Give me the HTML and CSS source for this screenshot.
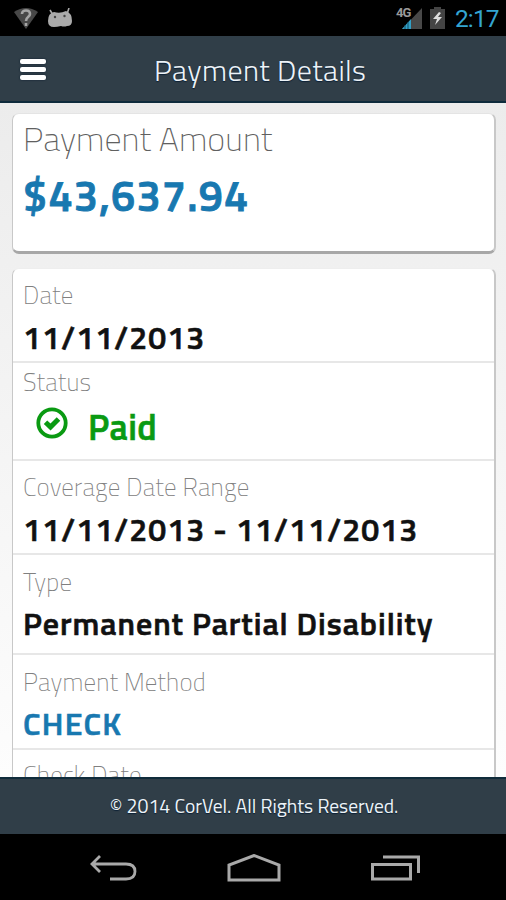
FILE: index.html
```html
<!DOCTYPE html>
<html lang="en">
<head>
<meta charset="utf-8">
<title>Payment Details</title>
<link rel="stylesheet" href="styles.css">
</head>
<body>
<div class="phone">
  <div class="status">
    <svg class="wifi" width="24" height="22" viewBox="0 0 24 22"><path d="M0 4Q12-4 24 4L12 21Z" fill="#484848"/><path d="M8 6Q8 2.500 12 2.500T16 6C16 9 12 8.500 12 13M12 15v3" fill="none" stroke="#a5a5a5" stroke-width="2.600"/></svg>
    <svg class="droid" width="26" height="20" viewBox="0 0 26 20"><path d="M3 2l3 5M22 0l-2 6" stroke="#aaa" stroke-width="1.600"/><path d="M1 13Q1 5 7 4q6 2 12-1 6 2 6 10 0 5-5 5-3 1-6 0-4 1-7 1-6 0-6-6Z" fill="#aaa"/><circle cx="8" cy="9" r="1.200" fill="#444"/><circle cx="17.500" cy="8" r="1.200" fill="#444"/></svg>
    <div class="signal"><svg width="23" height="22" viewBox="0 0 23 22"><path d="M23 0v21H3Z" fill="#484848"/><path d="M12 11v10H3Z" fill="#319fc6"/><path d="M6 17v4M9 14v7" stroke="#125168"/></svg><span class="net">4G</span></div>
    <svg class="battery" width="15" height="22" viewBox="0 0 15 22"><path d="M4 0h7v2h4v20H0V2h4Z" fill="#444"/><path d="M9 5L3 12h4l-2 6 7-8H8l3-4Z" fill="#ddd"/></svg>
    <span class="clock">2:17</span>
  </div>
  <header class="header">
    <div class="menu"><i></i><i></i><i></i></div>
    <h1 class="title">Payment Details</h1>
  </header>
  <main class="content">
    <section class="card amount">
      <div class="amount-label">Payment Amount</div>
      <div class="amount-value">$43,637.94</div>
    </section>
    <section class="card details">
      <div class="row date"><div class="label">Date</div><div class="value">11/11/2013</div></div>
      <div class="row state"><div class="label">Status</div>
        <div class="paid"><svg width="32" height="32" viewBox="0 0 32 32" fill="none" stroke="#0a9a12"><circle cx="16" cy="16" r="13.700" stroke-width="3.800"/><path d="M9.500 15.200l5 4.700 8-8" stroke-width="5"/></svg><span>Paid</span></div>
      </div>
      <div class="row range"><div class="label">Coverage Date Range</div><div class="value">11/11/2013 - 11/11/2013</div></div>
      <div class="row type"><div class="label">Type</div><div class="value words">Permanent Partial Disability</div></div>
      <div class="row method"><div class="label">Payment Method</div><div class="value check">CHECK</div></div>
      <div class="row last"><div class="label">Check Date</div></div>
    </section>
  </main>
  <footer class="footer">© 2014 CorVel. All Rights Reserved.</footer>
  <nav class="nav">
    <svg width="48" height="28" viewBox="0 0 48 28"><path d="M11 2L3 10l8 8M3 10h34q9 0 9 7.500T37 25H21" fill="none" stroke="#a9a9a9" stroke-width="2.800"/></svg>
    <svg width="54" height="28" viewBox="0 0 54 28"><path d="M2 26V11L27 1.500 52 11V26Z" fill="none" stroke="#a9a9a9" stroke-width="3"/></svg>
    <svg width="50" height="28" viewBox="0 0 50 28"><path d="M1.500 10.500h38v14.500h-38ZM12 3h35.500v16" fill="none" stroke="#a9a9a9" stroke-width="3"/></svg>
  </nav>
</div>
</body>
</html>
```
FILE: styles.css
```css
* { box-sizing: border-box; }
body { margin: 0; font-family: "Titillium Web", Roboto, "Open Sans", sans-serif; }
.phone { width: 506px; height: 900px; display: flex; flex-direction: column; overflow: hidden; background: #000; white-space: nowrap; }
.status { flex: none; height: 36px; display: flex; align-items: flex-start; padding: 8px 8px 0 14px; }
.droid { margin-left: 9px; }
.signal { position: relative; margin-left: auto; height: 22px; }
.net { position: absolute; left: -3px; top: -2px; font: 700 13px/14px Roboto, sans-serif; color: #999; letter-spacing: -1px; }
.signal svg { display: block; }
.battery { margin-left: 8px; margin-top: -1px; }
.clock { margin-left: 10px; font: 400 24.500px/22px Roboto, sans-serif; color: #33a5d2; width: 43px; letter-spacing: -0.9px; }
.header { flex: none; height: 67px; display: flex; align-items: center; padding-left: 20px; background: #303e48; border-bottom: 2px solid #0e2b3c; }
.menu { width: 26px; display: flex; flex-direction: column; gap: 3px; margin-top: 2px; }
.menu i { height: 5px; border-radius: 2px; background: #fff; box-shadow: 0 0 2px #081a2c; }
.title { margin: 2px 0 0 108px; font-size: 30px; line-height: 36px; font-weight: 300; color: #edf3f8; text-shadow: 0 1px 1px #0b2035; letter-spacing: 0.4px; }
.content { flex: 1; min-height: 0; overflow: hidden; padding: 10px 10px 0 12px; background: linear-gradient(#ececec, #fdfdfd); }
.card { background: #fff; border: 1px solid #c8c8c8; border-right-width: 2px; border-radius: 7px; }
.amount { height: 141px; padding: 4px 10px; border-top-color: #e4e4e4; border-bottom: 3px solid #a7a7a7; }
.amount-label { font-size: 34px; line-height: 40px; font-weight: 200; color: #606060; letter-spacing: 0.08px; }
.amount-value { margin-top: 12px; font-size: 43px; line-height: 50px; font-weight: 600; color: #1878b0; letter-spacing: 1.3px; -webkit-text-stroke: 0.9px currentColor; }
.details { margin-top: 14px; border-top-color: #eee; }
.row { padding-left: 10px; border-bottom: 2px solid #e7e7e7; }
.label { font-size: 25px; line-height: 30px; font-weight: 200; color: #808080; letter-spacing: 0.2px; }
.value { margin-top: 7px; font-size: 32px; line-height: 40px; font-weight: 600; color: #111; letter-spacing: 1.05px; -webkit-text-stroke: 0.6px currentColor; }
.words { letter-spacing: 0.95px; }
.date { height: 94px; padding-top: 11px; }
.state { height: 98px; padding-top: 4px; }
.range { height: 94px; padding-top: 11px; }
.type { height: 100px; padding-top: 12px; }
.method { height: 95px; padding-top: 12px; }
.method .value, .type .value { margin-top: 6px; }
.last { height: 100px; padding-top: 10px; }
.paid { display: flex; align-items: center; margin-left: 13px; font-size: 36px; line-height: 42px; font-weight: 600; color: #0a9a12; margin-top: 9px; }
.paid svg { margin-top: -8px; }
.paid span { margin-left: 20px; letter-spacing: 0.4px; -webkit-text-stroke: 0.6px currentColor; }
.check { color: #1878b0; letter-spacing: 1.3px; }
.footer { flex: none; height: 57px; background: #303e48; border-top: 2px solid #102c3b; color: #edf3f8; text-align: center; font-size: 19.500px; line-height: 54px; text-shadow: 0 1px 1px #0b2035; padding-left: 2px; }
.nav { flex: none; height: 66px; display: flex; justify-content: space-between; align-items: flex-start; padding: 20px 85px 0 89px; }
```
